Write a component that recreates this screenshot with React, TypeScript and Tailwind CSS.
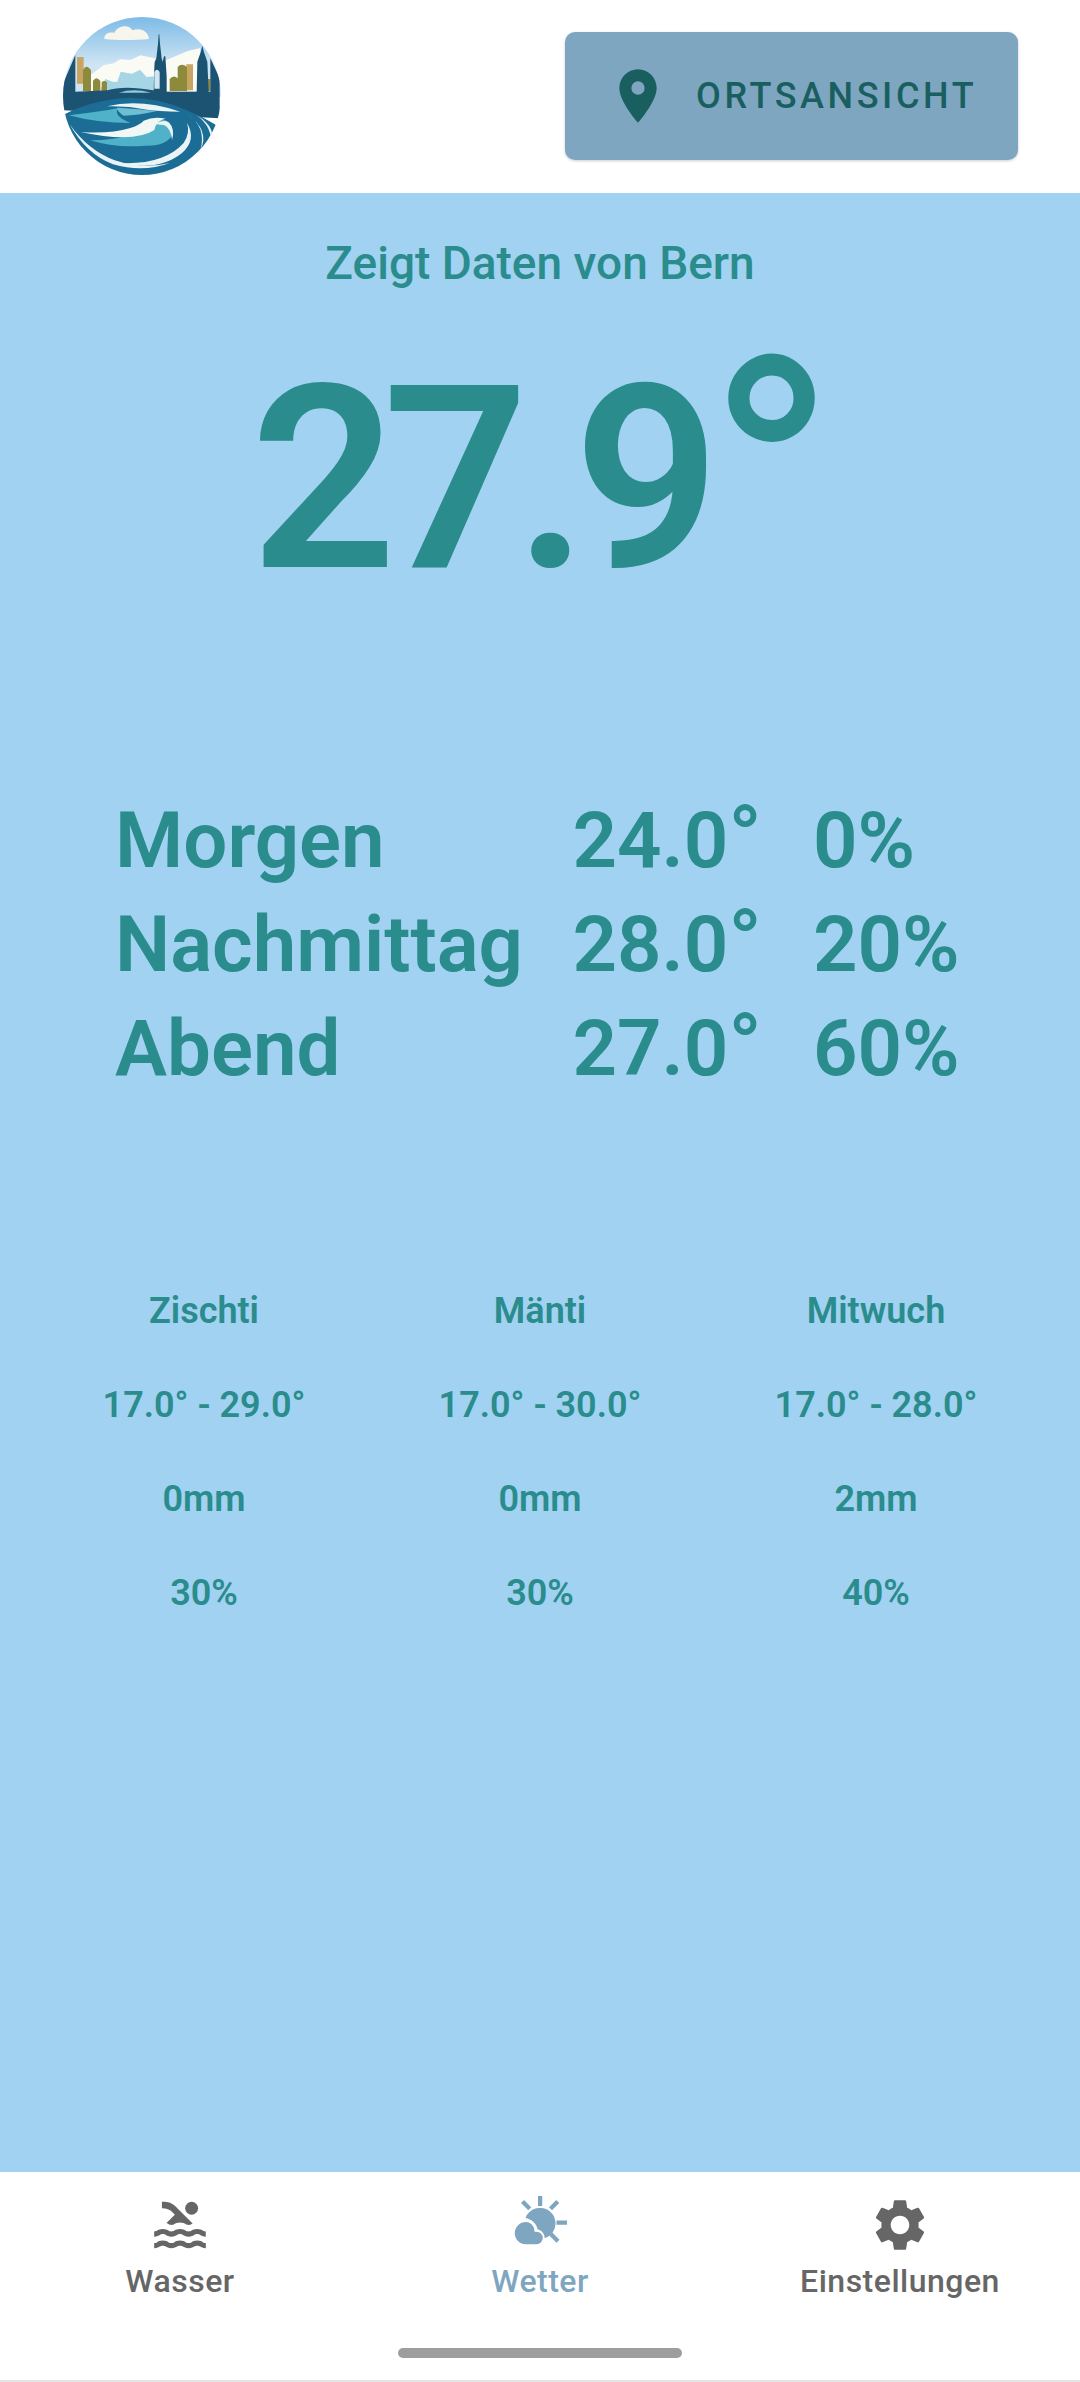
import { MdPool, MdSettings, MdLocationOn } from "react-icons/md";

function Logo() {
  return (
    <svg viewBox="68 50 474 474" className="w-[158px] h-[158px]">
      <defs>
        <linearGradient id="sky" x1="0" y1="0" x2="0" y2="1">
          <stop offset="0" stopColor="#7dbbe6" />
          <stop offset="0.6" stopColor="#cfe5f4" />
        </linearGradient>
        <clipPath id="c">
          <circle cx="305" cy="287" r="237" />
        </clipPath>
      </defs>
      <g clipPath="url(#c)">
        <rect x="68" y="50" width="474" height="240" fill="url(#sky)" />
        <path d="M192 112c2-12 16-18 30-14 8-22 44-28 54-8 24-10 48 2 50 26-40 4-100 4-134 0z" fill="#f7f6ec" />
        <path d="M150 225l40-30 30-6 20-12 30 2 30-14 40 8 30 10 70-30 40-10 0 130H150z" fill="#fbfbf5" />
        <path d="M180 268l15-32 22 8 14 0 10-30 34 6 24-12 20 22 22-2v40z" fill="#a6d5e5" />
        <path d="M110 250v-80h20v80z" fill="#c9a563" />
        <path d="M438 270v-78h20v78z" fill="#c9a563" />
        <path d="M128 272v-62q10-22 24 0v62zM158 272v-30q10-16 22 0v30zM184 272v-26q8-8 16 0v26z" fill="#8e8a3c" />
        <path d="M388 272v-36q12-14 24-2v-34q12-14 28 0v72z" fill="#8e8a3c" />
        <path d="M498 272v-36h12v36z" fill="#8e8a3c" />
        <path
          d="M68 330v-80l37-86v110l95-4q50-16 140 0l2-70q-2-14 6-26l5-44 2-28h2l2 28 5 44 3 10 4-16 4 0 4 60v46l90 0 2-90 10-28 5-20 5 20 10 28 4 90h5v-100l28 60v120z"
          fill="#1c5372"
        />
        <path d="M342 215q8-14 16 0v50h-16z" fill="#cfe6f2" />
        <path d="M236 277q44-14 96 0z" fill="#8fcbdc" />
        <path d="M60 350q60-40 170-55q110-10 210 35q70 30 110 60v150H60z" fill="#1b6d96" />
        <path d="M85 345q90-10 150-22q-20 22 35 45q-100 0-185-23z" fill="#4fb2c9" />
        <path d="M200 318q100-24 220 16q-70-2-100-6q-60-12-120-10z" fill="#eaf4f4" />
        <path d="M230 322q70 4 120 10q-60 14-100 14q-20-14-20-24z" fill="#6cc0d2" />
        <path d="M150 420q70 0 130-18q30-10 36-34q30-16 60-8q26 14 20 44q-20 34-80 32q-90 8-166-16z" fill="#4fb2c9" />
        <path d="M120 395q90 6 150-12q30-10 40-22q30-14 66-6q-28 4-34 34q-60 40-222 6z" fill="#f0f7f5" />
        <path d="M345 370q24-14 40-4q20 20 10 54q-2-36-24-46q-12 0-26-4z" fill="#eaf4f4" />
        <path d="M88 372q50 90 130 120q90 26 170-4q-80 20-165-8q-80-30-135-108z" fill="#eaf4f6" />
        <path d="M240 488q130 6 190-60q20-30 10-60q30 50-15 90q-70 56-185 30z" fill="#eaf4f6" />
        <path d="M440 340q60 40 40 110q30-60-40-110z" fill="#eaf4f6" />
        <path d="M470 345q50 40 40 90q24-50-40-90z" fill="#eaf4f6" />
      </g>
    </svg>
  );
}

function SunCloud() {
  return (
    <svg viewBox="0 0 24 24" className="w-[60px] h-[60px]" fill="#7fa6c0">
      <rect x="11.2" y="0.8" width="1.7" height="4" />
      <path d="M4.4 3.6l1.2-1.2 2.9 2.9-1.2 1.2z" />
      <path d="M19.7 3.6l-1.2-1.2-2.9 2.9 1.2 1.2z" />
      <rect x="18.6" y="10.6" width="4.2" height="1.7" />
      <path d="M15.7 16.6l1.2-1.2 2.9 2.9-1.2 1.2z" />
      <path d="M6.2 9.6a6.2 6.2 0 1 1 8.6 7.7l-.9.4c-.1-1.8-1.2-3.2-2.9-3.6-.3-2.3-2.4-4-4.8-4.5z" />
      <path d="M6.4 11.2a3.4 3.4 0 0 1 3.3 3l.1.9h.8a2.5 2.5 0 0 1 0 5H6.3a4 4 0 0 1 .1-8.9z" />
    </svg>
  );
}

const rows = [
  ["Morgen", "24.0", "0%"],
  ["Nachmittag", "28.0", "20%"],
  ["Abend", "27.0", "60%"],
];

const days = [
  ["Zischti", "17.0° - 29.0°", "0mm", "30%"],
  ["Mänti", "17.0° - 30.0°", "0mm", "30%"],
  ["Mitwuch", "17.0° - 28.0°", "2mm", "40%"],
];

export default function App() {
  return (
    <div className="h-[2382px] w-[1080px] flex flex-col bg-white font-['Roboto',sans-serif] overflow-hidden">
      <header className="h-[193px] flex items-start justify-between bg-white">
        <div className="ml-[63px] mt-[17px]">
          <Logo />
        </div>
        <button className="mt-[32px] mr-[62px] w-[453px] h-[128px] rounded-[10px] bg-[#7fa6c0] shadow-[0_1px_3px_rgba(0,0,0,0.2)] flex items-center pl-[41px] gap-[26px] text-[#1a5f5f]">
          <MdLocationOn size={64} className="shrink-0" />
          <span className="text-[36px] font-medium tracking-[3.6px]">ORTSANSICHT</span>
        </button>
      </header>

      <main className="flex-1 bg-[#a1d2f1] text-[#2a8c8c] font-semibold pt-[40px]">
        <div className="text-center text-[46px] leading-[60px] font-medium">Zeigt Daten von Bern</div>
        <div className="mt-[59px] pl-[7px] text-center text-[256px] leading-[256px] font-semibold tracking-[-14px]">
          27.9<span className="text-[350px] leading-[0] font-normal tracking-normal align-[-39px]">°</span>
        </div>

        <div className="mt-[181px] px-[115px] grid grid-cols-[415px_232px_1fr] text-[78px] leading-[104px]">
          {rows.map((r) => (
            <div key={r[0]} className="contents">
              <div>{r[0]}</div>
              <div className="text-right">
                {r[1]}
                <span className="text-[88px] leading-[0] font-medium">°</span>
              </div>
              <div className="pl-[51px]">{r[2]}</div>
            </div>
          ))}
        </div>

        <div className="mt-[163px] px-[36px] grid grid-cols-3 text-center text-[36px] leading-[94px]">
          {days.map((d) => (
            <div key={d[0]}>
              {d.map((t) => (
                <div key={t}>{t}</div>
              ))}
            </div>
          ))}
        </div>
      </main>

      <nav className="h-[210px] bg-white border-b-2 border-[#e5e5e5] flex flex-col">
        <div className="grid grid-cols-3 pt-[22px] text-[32px] leading-[44px] tracking-[0.5px] font-medium text-[#666666] text-center">
          <div className="flex flex-col items-center">
            <MdPool size={62} />
            <span className="mt-[3px]">Wasser</span>
          </div>
          <div className="flex flex-col items-center text-[#7fa6c0]">
            <SunCloud />
            <span className="mt-[5px]">Wetter</span>
          </div>
          <div className="flex flex-col items-center">
            <MdSettings size={62} />
            <span className="mt-[3px]">Einstellungen</span>
          </div>
        </div>
        <div className="mt-[45px] mx-auto w-[284px] h-[10px] rounded-full bg-[#9e9e9e]" />
      </nav>
    </div>
  );
}
